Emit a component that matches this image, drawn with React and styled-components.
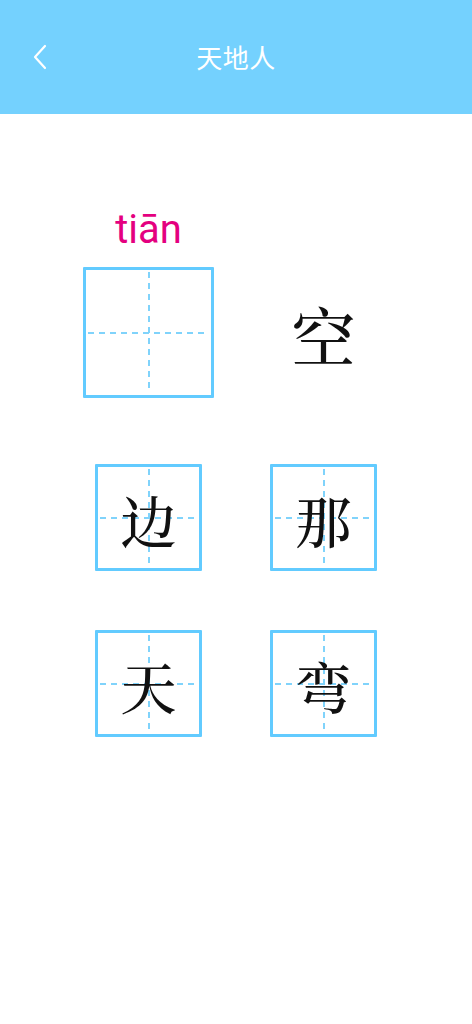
import React from "react";
import styled, { createGlobalStyle } from "styled-components";

const Global = createGlobalStyle`
  html, body { margin: 0; padding: 0; background: #ffffff; }
  body { font-family: "Noto Sans CJK SC", "Noto Sans", sans-serif; }
`;

const Page = styled.div`
  width: 472px;
  min-height: 1024px;
  background: #ffffff;
`;

const Header = styled.header`
  height: 114px;
  background: #74d1fe;
  display: flex;
  align-items: center;
  justify-content: center;
  position: relative;
`;

const BackButton = styled.button`
  position: absolute;
  left: 26px;
  top: 43px;
  width: 28px;
  height: 28px;
  padding: 0;
  border: 0;
  background: transparent;
  display: flex;
  align-items: center;
  justify-content: center;
`;

const Title = styled.h1`
  margin: 0 0 1px;
  color: #ffffff;
  font-family: "Noto Sans CJK SC", sans-serif;
  font-weight: 400;
  font-size: 26px;
  line-height: 1;
  letter-spacing: 0.5px;
`;

const Content = styled.main`
  padding-top: 92px;
  display: flex;
  flex-direction: column;
  align-items: center;
`;

const TopRow = styled.div`
  display: grid;
  grid-template-columns: 175px 175px;
`;

const Cell = styled.div`
  display: flex;
  flex-direction: column;
  align-items: center;
`;

const CharCell = styled.div`
  display: flex;
  align-items: center;
  justify-content: center;
  padding-top: 59px;
`;

const Pinyin = styled.div`
  font-family: Roboto, "Liberation Sans", sans-serif;
  font-size: 40px;
  line-height: 48px;
  color: #e4007f;
  margin-bottom: 13px;
`;

const Box = styled.div`
  position: relative;
  box-sizing: border-box;
  width: ${(p) => p.$size}px;
  height: ${(p) => p.$size}px;
  border: 3px solid #62cbff;
  border-radius: 1px;
  display: flex;
  align-items: center;
  justify-content: center;

  &::before {
    content: "";
    position: absolute;
    left: calc(50% - 0.5px);
    top: 2px;
    bottom: 2px;
    width: 2px;
    background: repeating-linear-gradient(
      to bottom,
      #80d3fb 0 6px,
      transparent 6px 11px
    );
  }
  &::after {
    content: "";
    position: absolute;
    top: calc(50% - 0.5px);
    left: 2px;
    right: 2px;
    height: 2px;
    background: repeating-linear-gradient(
      to right,
      #80d3fb 0 6px,
      transparent 6px 11px
    );
  }
`;

const Hanzi = styled.span`
  position: relative;
  z-index: 1;
  font-family: "AR PL UKai CN", "KaiTi", "Noto Serif CJK SC", "Noto Sans CJK SC", serif;
  font-size: ${(p) => p.$size}px;
  font-weight: 500;
  line-height: 1;
  color: #111111;
  margin-top: 2px;
`;

const Grid = styled.div`
  margin-top: 66px;
  display: grid;
  grid-template-columns: 175px 175px;
  row-gap: 59px;
  justify-items: center;
`;

const words = ["边", "那", "天", "弯"];

export default function App() {
  return (
    <Page>
      <Global />
      <Header>
        <BackButton aria-label="back">
          <svg width="16" height="26" viewBox="0 0 16 26">
            <polyline
              points="13,2 3,13 13,24"
              fill="none"
              stroke="#ffffff"
              strokeWidth="2.2"
              strokeLinecap="round"
              strokeLinejoin="round"
            />
          </svg>
        </BackButton>
        <Title>天地人</Title>
      </Header>
      <Content>
        <TopRow>
          <Cell>
            <Pinyin>tiān</Pinyin>
            <Box $size={131} />
          </Cell>
          <CharCell>
            <Hanzi $size={64}>空</Hanzi>
          </CharCell>
        </TopRow>
        <Grid>
          {words.map((w) => (
            <Box key={w} $size={107}>
              <Hanzi $size={56}>{w}</Hanzi>
            </Box>
          ))}
        </Grid>
      </Content>
    </Page>
  );
}
